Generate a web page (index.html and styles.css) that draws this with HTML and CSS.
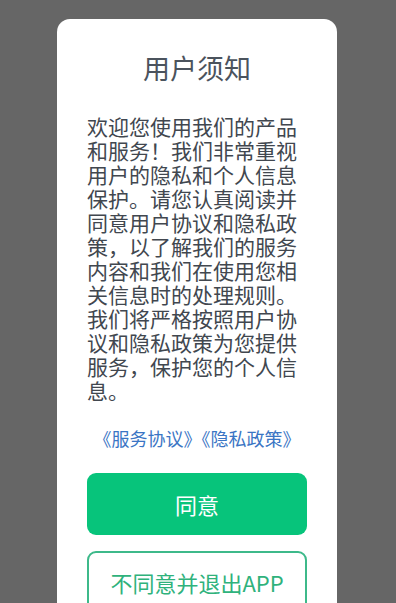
FILE: index.html
```html
<!DOCTYPE html>
<html lang="zh-CN">
<head>
<meta charset="utf-8">
<title>用户须知</title>
<link rel="stylesheet" href="styles.css">
</head>
<body>
<div class="overlay">
  <div class="dialog">
    <h1 class="title">用户须知</h1>
    <p class="content">欢迎您使用我们的产品和服务！我们非常重视用户的隐私和个人信息保护。请您认真阅读并同意用户协议和隐私政策，以了解我们的服务内容和我们在使用您相关信息时的处理规则。我们将严格按照用户协议和隐私政策为您提供服务，保护您的个人信息。</p>
    <div class="links"><a class="link" href="#">《服务协议》</a><a class="link" href="#">《隐私政策》</a></div>
    <button class="btn btn-agree" type="button">同意</button>
    <button class="btn btn-exit" type="button">不同意并退出APP</button>
  </div>
</div>
</body>
</html>
```
FILE: styles.css
```css
html, body {
  margin: 0;
  padding: 0;
  height: 100%;
  overflow: hidden;
}
body {
  background: #666666;
  font-family: "Noto Sans CJK SC", "Noto Sans", sans-serif;
}
.overlay {
  padding-top: 19px;
  display: flex;
  justify-content: center;
}
.dialog {
  width: 280px;
  margin-left: -2px;
  background: #ffffff;
  border-radius: 13px;
  padding: 31px 30px 40px;
  box-sizing: border-box;
  display: flex;
  flex-direction: column;
}
.title {
  margin: 0;
  font-size: 27px;
  line-height: 36px;
  font-weight: 400;
  color: #4b535d;
  text-align: center;
}
.content {
  margin: 28px 0 0;
  font-size: 21px;
  line-height: 24px;
  color: #41474f;
}
.links {
  margin-top: 24px;
  text-align: center;
  font-size: 18px;
  line-height: 24px;
  white-space: nowrap;
}
.link {
  color: #3a75c4;
  text-decoration: none;
}
.btn {
  font-family: inherit;
  font-size: 22px;
  height: 62px;
  border-radius: 9px;
  width: 100%;
  padding: 0;
}
.btn-agree {
  margin-top: 23px;
  background: #07c47b;
  border: none;
  color: #ffffff;
}
.btn-exit {
  margin-top: 16px;
  background: #ffffff;
  border: 2px solid #3db98a;
  color: #2fb27c;
}
```
